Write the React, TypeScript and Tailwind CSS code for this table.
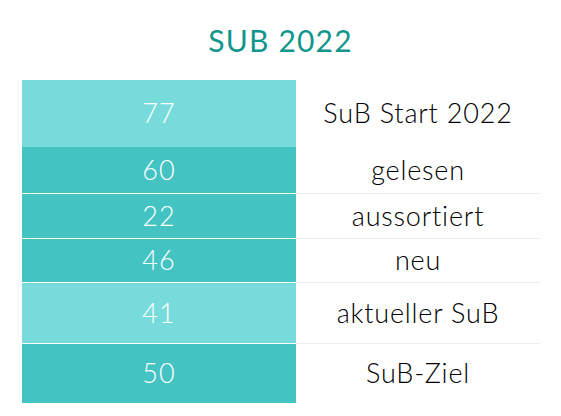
export default function App() {
  const rows = [
    { value: 77, label: "SuB Start 2022", h: "h-[67px]", light: true, border: false },
    { value: 60, label: "gelesen", h: "h-[47px]", light: false, border: true },
    { value: 22, label: "aussortiert", h: "h-[45px]", light: false, border: true },
    { value: 46, label: "neu", h: "h-[44px]", light: false, border: true },
    { value: 41, label: "aktueller SuB", h: "h-[61px]", light: true, border: true },
    { value: 50, label: "SuB-Ziel", h: "h-[59px]", light: false, border: false },
  ]

  return (
    <div className="w-[561px] h-[416px] bg-white font-['Lato',sans-serif]">
      <h1 className="pt-[22px] h-[80px] text-center text-[30px] leading-[36px] tracking-[1.2px] text-[#11968b] font-normal">
        SUB 2022
      </h1>
      <div className="ml-[22px] w-[518px]">
        {rows.map((r) => (
          <div key={r.label} className={`flex ${r.h}`}>
            <div
              className={`w-[274px] flex items-center justify-center text-white text-[27px] tracking-[1px] font-light ${
                r.light ? "bg-[#77dbdb]" : "bg-[#44c3c3]"
              } ${r.border ? "border-b border-white" : ""}`}
            >
              {r.value}
            </div>
            <div
              className={`flex-1 flex items-center justify-center text-[27px] tracking-[0.8px] font-light text-black ${
                r.border ? "border-b border-[#ececec]" : ""
              }`}
            >
              {r.label}
            </div>
          </div>
        ))}
      </div>
    </div>
  )
}
